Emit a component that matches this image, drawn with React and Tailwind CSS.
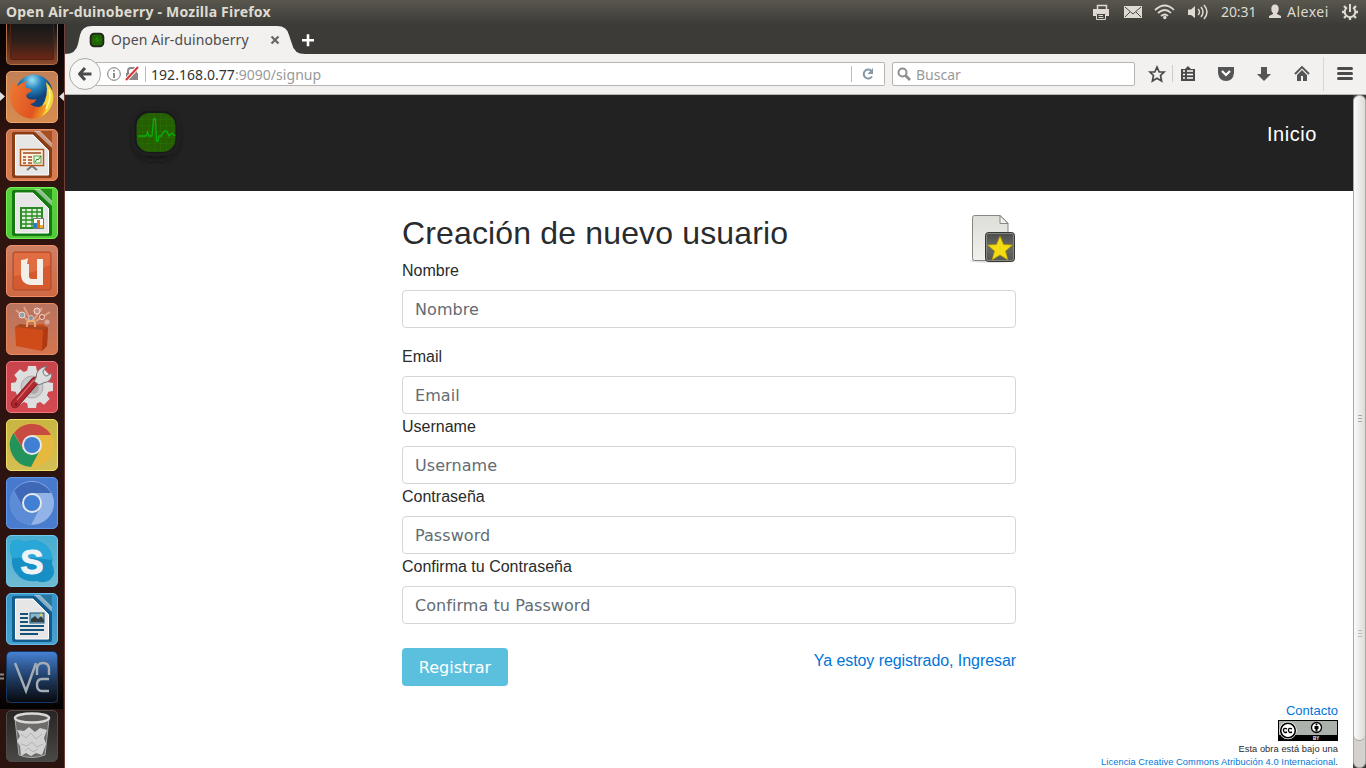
import React from "react";

const ui = "font-['Noto_Sans',sans-serif]";

function Tile({ className = "", children }) {
  return (
    <div className={`h-[52px] w-[52px] shrink-0 overflow-hidden rounded-[5px] border ${className}`}>
      <svg viewBox="1 1 50 50" className="block h-full w-full">{children}</svg>
    </div>
  );
}

function OfficePage({ dark, mid, children }) {
  return (
    <>
      <path d="M8 3H34L46 15V47Q46 49 44 49H8Q6 49 6 47V5Q6 3 8 3Z" fill={dark} />
      <path d="M34 2H46V14Z" fill={mid} />
      <path d="M28 2H34L46 14V19Z" fill="#fff" opacity=".5" />
      <path d="M9.500 6H27L42.500 21.500V46H9.500Z" fill="#e6e6e6" stroke="#fff" />
      {children}
    </>
  );
}

function ChromeMark({ red, green, yellow, blue }) {
  return (
    <g>
      <circle cx="26" cy="26" r="22" fill={yellow} />
      <path d="M7.500 14A22 22 0 0 0 25 48L34 31L26 26L17 30Z" fill={green} />
      <path d="M8 14A22 22 0 0 1 45 16H26L17 30Z" fill={red} />
      <circle cx="26" cy="26" r="10" fill="#e8e8e8" />
      <circle cx="26" cy="26" r="8" fill={blue} />
    </g>
  );
}

function Launcher() {
  return (
    <aside className="relative flex h-[744px] w-[65px] shrink-0 flex-col items-start gap-[6px] overflow-hidden border-r border-[#70413b] bg-gradient-to-b from-[#050303] from-0% via-[#30140f] via-15% to-[#2b1310] pl-[6px]">
      <div className="h-[41px] w-[52px] shrink-0 rounded-b-[5px] border border-t-0 border-[#b16d45] bg-gradient-to-b from-[#141110] to-[#8c4a2b] px-[3px] pb-[4px]">
        <div className="h-full rounded-b-[2px] border border-t-0 border-[#53200f] bg-gradient-to-b from-[#171719] via-[#30201a] to-[#6c2615]" />
      </div>

      <Tile className="border-[#efa46b] bg-gradient-to-b from-[#c18055] to-[#d58c50]">
        <defs>
          <radialGradient id="globe" cx=".45" cy=".15"><stop stopColor="#9be2f5" /><stop offset=".5" stopColor="#2684bd" /><stop offset="1" stopColor="#12457d" /></radialGradient>
          <linearGradient id="fox" x2="1" y2=".3"><stop stopColor="#ee7a35" /><stop offset=".7" stopColor="#e0541f" /><stop offset="1" stopColor="#f5a823" /></linearGradient>
        </defs>
        <circle cx="28" cy="22" r="18.500" fill="url(#globe)" />
        <path d="M8 10Q9 14 11 15Q15 12 21 10Q19 13 20 17Q24 17 26 19Q25 21 21 23Q19 26 23 28Q26 29 30 28Q30 32 24 33Q33 40 40 31Q43 27 44 22L47 24Q47 38 37 45Q26 51 14 44Q4 37 4 25Q4 16 8 10Z" fill="url(#fox)" />
        <path d="M40 11Q49 19 47 30Q45 40 36 45Q41 38 40 33L36 35Q43 25 40 11Z" fill="#f6d53b" />
        <path d="M43 18Q46 27 40 38" fill="none" stroke="#fff59a" strokeWidth="1.500" />
      </Tile>

      <Tile className="border-[#f09366] bg-gradient-to-b from-[#c77752] to-[#d77c50]">
        <OfficePage dark="#8c3d16" mid="#a74f23">
          <path d="M21 41L26 37L31 41M26 35V38" stroke="#777" strokeWidth="2" fill="none" />
          <rect x="14.500" y="20.500" width="23" height="16" fill="#fff0e1" stroke="#b4571d" strokeWidth="1.500" />
          <path d="M17 24H35M17 28H20M22 28H26M17 31H20M22 31H26M17 34H20M22 34H26" stroke="#9b4b20" strokeWidth="1.700" />
          <rect x="28" y="27" width="7" height="7" fill="#edfbe4" stroke="#56a044" />
          <path d="M29 33L31 30L32 31L35 27" stroke="#2b8228" fill="none" />
        </OfficePage>
      </Tile>

      <Tile className="border-[#71f253] bg-gradient-to-b from-[#5bd03f] to-[#52c93a]">
        <OfficePage dark="#147a12" mid="#248e1b">
          <path d="M15 21H36V41H15Z" fill="#dff2d8" stroke="#2a8b24" strokeWidth="2" />
          <path d="M15 25H36M15 29H36M15 33H36M15 37H36M20 21V41M26 21V41M31 21V41" stroke="#2a8b24" strokeWidth="1.300" />
          <rect x="27.500" y="31.500" width="10" height="10" fill="#fff" stroke="#777" />
          <path d="M28 36H31V41H28Z" fill="#287aca" /><path d="M31 33H34V41H31Z" fill="#da6d17" /><path d="M34 38H37V41H34Z" fill="#e4b329" />
        </OfficePage>
      </Tile>

      <Tile className="border-[#f38e66] bg-gradient-to-b from-[#cc8063] to-[#cf6944]">
        <rect x="7" y="7" width="38" height="38" rx="2" fill="#d65a2f" stroke="#ad492a" />
        <path d="M8 8H44V20Q26 29 8 31Z" fill="#e4784c" opacity=".65" />
        <path d="M15 15Q19 15 22 13L21 19H23V31Q23 34 26 34H31V14H37V40H24Q16 39 15 31Z" fill="#f4eee9" />
      </Tile>

      <Tile className="border-[#e48b66] bg-gradient-to-b from-[#b87460] to-[#d4754f]">
        <path d="M24 19L10 7M25 18L18 4M27 18L36 5M30 18L44 9" stroke="#f8bc9d" strokeWidth="2" opacity=".6" />
        <circle cx="16" cy="12" r="3" fill="#91a2b2" stroke="#f2d9ce" /><circle cx="31" cy="8" r="3" fill="#c1928a" stroke="#f2d9ce" /><circle cx="36" cy="14" r="2.500" fill="#bc5e49" stroke="#f2d9ce" /><circle cx="25" cy="15" r="2.500" fill="#87929e" stroke="#ddc0b2" /><circle cx="41" cy="19" r="2.500" fill="#d9a99b" />
        <path d="M9 24L37 21L42 25L41 43L36 48L10 43Z" fill="#cf4c19" />
        <path d="M9 24L14 21L42 24L37 27Z" fill="#a84720" /><path d="M37 27L42 24L41 43L36 48Z" fill="#ae3912" />
        <path d="M21 24V20Q21 18 23 18H27Q29 18 29 20V24" stroke="#edb074" strokeWidth="1.800" fill="none" />
      </Tile>

      <Tile className="border-[#f0797e] bg-gradient-to-b from-[#c8444b] to-[#d44952]">
        <g fill="#dedede">
          <circle cx="26" cy="26" r="17" />
          <path d="M22 5H30L31 11H21ZM22 47H30L31 41H21ZM5 22V30L11 31V21ZM47 22V30L41 31V21Z" />
          <path d="M22 5H30L31 11H21Z" transform="rotate(45 26 26)" /><path d="M22 5H30L31 11H21Z" transform="rotate(135 26 26)" /><path d="M22 5H30L31 11H21Z" transform="rotate(225 26 26)" /><path d="M22 5H30L31 11H21Z" transform="rotate(315 26 26)" />
        </g>
        <circle cx="26" cy="26" r="11" fill="#c9c9c9" stroke="#aaa" /><circle cx="27" cy="27" r="6" fill="#aaa" />
        <path d="M9 43L29 20" stroke="#801c22" strokeWidth="8.500" strokeLinecap="round" /><path d="M9 43L29 20" stroke="#b3272f" strokeWidth="6.500" strokeLinecap="round" />
        <path d="M11 39L28 19" stroke="#d8666a" strokeWidth="1.300" />
        <path d="M30 17Q30 7 41 5L37 10Q37 15 41 15L46 12Q46 21 37 22L33 24L28 20Z" fill="#ddd" stroke="#777" />
        <circle cx="10" cy="43" r="1.500" fill="#741820" />
      </Tile>

      <Tile className="border-[#f0df69] bg-gradient-to-b from-[#c8b542] to-[#d5bf53]">
        <ChromeMark red="#c84b42" green="#22945b" yellow="#e6b83e" blue="#417fd3" />
      </Tile>
      <Tile className="border-[#5f97eb] bg-gradient-to-b from-[#4779cd] to-[#4b7dce]">
        <ChromeMark red="#3f68b6" green="#5d8cd6" yellow="#91b3e8" blue="#407fd3" />
      </Tile>

      <Tile className="border-[#70c9eb] bg-gradient-to-b from-[#46aed2] to-[#70b9d4]">
        <path d="M6 6Q13 3 18 7Q31 2 41 11Q48 18 46 29Q51 38 44 45Q37 49 31 46Q17 48 10 38Q5 32 6 23Q2 13 6 6Z" fill="#168fc5" />
        <path d="M6 6Q13 3 18 7Q31 2 41 11Q48 18 46 25Q25 22 6 23Q2 13 6 6Z" fill="#31b1df" opacity=".7" />
        <text x="26" y="38.500" textAnchor="middle" fontSize="35" fontWeight="700" fontFamily="Liberation Sans, sans-serif" fill="#f0f3f5" stroke="#f0f3f5" strokeWidth=".9">S</text>
      </Tile>

      <Tile className="border-[#66bdea] bg-gradient-to-b from-[#3694c9] to-[#48a0ce]">
        <OfficePage dark="#125d8d" mid="#2b789f">
          <path d="M14 21H22M14 25H22M14 29H22M14 33H38M14 37H38M14 41H32" stroke="#15527a" strokeWidth="2" />
          <rect x="24" y="20" width="14" height="10" fill="#85b6cd" stroke="#15527a" /><path d="M25 29V26L29 23L32 26L35 23L38 27V29Z" fill="#343b3d" /><circle cx="35" cy="22" r="1.500" fill="#dcd052" />
        </OfficePage>
      </Tile>

      <Tile className="border-[#143765] bg-gradient-to-b from-[#4680d3] via-[#203f68] to-[#070a0f]">
        <path d="M9 12L20 40L30 12M31 24V18Q31 12 37 12Q43 12 43 18V24M43 28H36Q31 28 31 34Q31 40 36 40H43" fill="none" stroke="#a5acb4" strokeWidth="2.400" />
      </Tile>

      <div className="mt-[1px]">
        <Tile className="border-[#4c4a49] bg-gradient-to-b from-[#292524] to-[#494948]">
          <path d="M9 9L13 45Q26 50 39 45L43 9" fill="#6d6c6b" stroke="#a8a8a8" />
          <ellipse cx="26" cy="8" rx="17" ry="4.500" fill="#5c5a59" stroke="#d8d8d8" strokeWidth="2.500" />
          <path d="M11 20L18 21L23 17L29 22L34 18L41 20L38 28L40 34L36 45L30 43L25 46L20 43L15 46L14 36L11 31L14 26Z" fill="#d2d2d2" />
          <path d="M15 24L20 28L25 23L30 29L36 24M15 34L21 36L26 32L31 37L37 34M19 41L22 38L27 42L32 39" stroke="#b2b2b2" fill="none" />
        </Tile>
      </div>
      <svg className="pointer-events-none absolute left-0 top-0 h-[744px] w-[64px]" viewBox="0 0 64 744">
        <defs><linearGradient id="fade" x2="0" y2="1"><stop stopColor="#000" stopOpacity="0" /><stop offset="1" stopColor="#000" stopOpacity=".95" /></linearGradient></defs>
        <path d="M0 634H6V679H58V634H63V685H0Z" fill="url(#fade)" />
        <path d="M0 68L5 72.500L0 77ZM64 68L59 72.500L64 77Z" fill="#ddd" />
        <path d="M0 650.500H4M0 654.500H4" stroke="#888" strokeWidth="2" />
      </svg>
    </aside>
  );
}

function TopBar() {
  return (
    <header className={`flex h-6 items-center justify-between bg-gradient-to-b from-[#59574d] to-[#3d3c38] pl-[6px] pr-[7px] text-[#dfdbd2] ${ui}`}>
      <div className="whitespace-nowrap text-[14px] font-bold leading-6 tracking-[0.225px]">Open Air-duinoberry - Mozilla Firefox</div>
      <div className="flex h-6 items-center">
        <svg width="128" height="24" viewBox="0 0 128 24" className="mr-[1px]" fill="none" stroke="#dfdbd2">
          <path d="M5.500 9V5.500H14.500V9" strokeWidth="1.500" />
          <path d="M1 9H17V16H14V13H4V16H1Z" fill="#dfdbd2" stroke="none" /><path d="M4.500 13.500H13.500V19.500H4.500ZM6.500 15.500H11M6.500 17.500H11.500" />
          <path d="M32 6H50V18H32Z" fill="#dfdbd2" stroke="none" /><path d="M33 7L41 14L49 7M33 17L38 12M49 17L44 12" stroke="#494840" />
          <path d="M63 10Q73 1 82 10M66 13Q73 7 79 13M69 16Q73 13 76 16" strokeWidth="1.700" /><circle cx="72.800" cy="17.500" r="1.700" fill="#dfdbd2" stroke="none" />
          <path d="M96 9.500H99L103 6V18L99 15H96Z" fill="#dfdbd2" stroke="none" /><path d="M106 9Q109 12 106 15M109 7Q113 12 109 17M112 5Q118 12 112 19" strokeWidth="1.500" />
        </svg>
        <div className="w-[36px] whitespace-nowrap text-[14px] leading-6 tracking-[-0.1px]">20:31</div>
        <svg width="14" height="24" viewBox="0 0 14 24" className="ml-[11px] mr-[5px] shrink-0" fill="#dfdbd2"><ellipse cx="7" cy="9" rx="3.700" ry="4.500" /><path d="M5 12H9V14L13 16V18H1V16L5 14Z" /></svg>
        <div className="w-[43px] whitespace-nowrap text-[14px] leading-6 tracking-[0.5px]">Alexei</div>
        <svg width="18" height="24" viewBox="0 0 18 24" className="ml-[11px]" fill="none" stroke="#dfdbd2"><path d="M6 7.500A5.300 5.300 0 1 0 12 7.500" strokeWidth="2" /><path d="M9 4V12" strokeWidth="2" /><path d="M1 12H4M14 12H17M3 6L5 8M15 6L13 8M3 18L5 16M15 18L13 16M9 17V20" strokeWidth="2.300" /></svg>
      </div>
    </header>
  );
}

function TabStrip() {
  return (
    <div className={`relative h-[30px] bg-[#3c3b37] ${ui}`}>
      <svg className="absolute inset-0" width="270" height="30" viewBox="0 0 270 30"><path d="M0 30Q11 30 13 20L15 11Q17 2 27 2H212Q222 2 224 11L227 20Q229 30 240 30Z" fill="#f2f1f0" /><path d="M243 10V22M237 16H249" transform="translate(0 .200)" stroke="#fff" strokeWidth="2.600" /></svg>
      <div className="relative flex h-[30px] items-center pl-[24px] pt-[2px]">
        <svg width="16" height="16" viewBox="0 0 16 16" className="mr-[6px]"><rect x=".7" y=".7" width="14.600" height="14.600" rx="4.500" fill="#1d261a" /><rect x="2.500" y="2.500" width="11" height="11" rx="3" fill="#236202" /><path d="M4 8H7L8 5V10L9 8H12" fill="none" stroke="#159509" strokeWidth=".8" /></svg>
        <div className="w-[159px] whitespace-nowrap text-[14px] leading-5 tracking-[0.1px] text-[#4c4c4c]">Open Air-duinoberry</div>
        <svg width="10" height="10" viewBox="0 0 10 10"><path d="M1.500 1.500L8.500 8.500M8.500 1.500L1.500 8.500" stroke="#666" strokeWidth="2.200" /></svg>
      </div>
    </div>
  );
}

function Toolbar() {
  return (
    <div className={`flex h-[41px] items-center border-b border-[#b7b5b1] bg-[#f2f1f0] pl-[4px] ${ui}`}>
      <div className="relative z-10 flex h-8 w-8 shrink-0 items-center justify-center rounded-full border border-[#aba9a5] bg-[#f7f7f6]">
        <svg width="16" height="16" viewBox="0 0 16 16"><path d="M8 2L2.500 8L8 14M3 8H14.500" fill="none" stroke="#4b4b4b" strokeWidth="3" strokeLinejoin="round" /></svg>
      </div>
      <div className="-ml-[5px] flex h-6 w-[789px] shrink-0 items-center rounded-r-[2px] border border-l-0 border-[#b6b4b0] bg-white pl-[10px]">
        <svg width="34" height="16" viewBox="0 0 34 16" fill="none"><circle cx="8" cy="8" r="6.300" stroke="#777" /><path d="M8 7V12M8 4V5.500" stroke="#666" strokeWidth="1.500" /><path d="M22 8V5Q22 2 25 2H27Q30 2 30 5V8" stroke="#888" strokeWidth="2" /><rect x="20" y="7" width="12" height="7" fill="#888" /><path d="M20 14L32 1" stroke="#fff" strokeWidth="4" /><path d="M20 14L32 1" stroke="#dc3333" strokeWidth="2" /></svg>
        <span className="ml-[5px] mr-[5px] h-4 w-px bg-[#bbb]" />
        <div className="flex-1 whitespace-nowrap pt-[2px] text-[14px] leading-5 text-[#999]"><span className="tracking-[0.05px] text-[#333]">192.168.0.77</span><span className="tracking-[0.03px]">:9090/signup</span></div>
        <div className="flex h-4 w-[33px] items-center justify-center border-l border-[#bbb]"><svg width="14" height="14" viewBox="0 0 14 14"><path d="M11 9.500A4.500 4.500 0 1 1 10 3.500" fill="none" stroke="#8797a3" strokeWidth="2" /><path d="M12 1V7H6.500Z" fill="#8797a3" /></svg></div>
      </div>
      <div className="ml-[7px] flex h-6 w-[243px] shrink-0 items-center rounded-[2px] border border-[#b6b4b0] bg-white pl-[4px]">
        <svg width="15" height="15" viewBox="0 0 15 15" fill="none" stroke="#8f8f8f"><circle cx="5.500" cy="5.500" r="4" strokeWidth="2" /><path d="M8.500 8.500L13 13" strokeWidth="2.800" /></svg>
        <span className="ml-[4px] pt-[2px] text-[14px] leading-5 text-[#999]">Buscar</span>
      </div>
      <svg width="231" height="40" viewBox="0 0 231 40" className="shrink-0" fill="none">
        <path d="M22 13L24.200 18H29L25.500 21.500L26.600 27L22 24.200L17.400 27L18.500 21.500L15 18H19.800Z" stroke="#4a4a4a" strokeWidth="1.700" />
        <path d="M37.500 11V28" stroke="#ccc" />
        <path d="M46 15H50L53 12L56 15H60V27H46Z" fill="#4a4a4a" /><path d="M48 17H50M52 17H58M48 20.500H50M52 20.500H58M48 24H50M52 24H58" stroke="#fff" strokeWidth="1.700" />
        <path d="M83 13H99V19Q98 27 91 27Q84 27 83 19Z" fill="#555" /><path d="M87 17L91 21L95 17" stroke="#fff" strokeWidth="2.200" />
        <path d="M126 13H132V20H136L129 27L122 20H126Z" fill="#555" />
        <path d="M160 20L167 13L174 20" stroke="#555" strokeWidth="1.900" /><path d="M162 21L167 16L172 21V27H168V22H166V27H162Z" fill="#555" />
        <path d="M188.500 3V37" stroke="#d8d6d3" />
        <path d="M203.500 14.500H216.500M203.500 19.500H216.500M203.500 24.500H216.500" stroke="#4b4b4b" strokeWidth="3" strokeLinecap="round" />
      </svg>
    </div>
  );
}

function PulseLogo() {
  return (
    <svg width="64" height="64" viewBox="0 0 64 64">
      <defs><pattern id="grid" width="6" height="6" patternUnits="userSpaceOnUse"><rect width="6" height="6" fill="#255f02" /><path d="M0 0H6M0 0V6" stroke="#2b7006" /></pattern>
      <filter id="shade" x="-30%" y="-30%" width="160%" height="160%"><feGaussianBlur stdDeviation="3" /></filter></defs>
      <rect x="10" y="12" width="44" height="46" rx="17" fill="#121212" filter="url(#shade)" />
      <rect x="7" y="5" width="50" height="50" rx="18" fill="#202021" />
      <rect x="10.500" y="10" width="42" height="42" rx="14" fill="#18181c" />
      <rect x="13" y="12.500" width="38" height="38" rx="12" fill="url(#grid)" stroke="#235d06" />
      <path d="M14 35H22L23.500 31L25 35H28L29.500 18H31.500L32.500 40L34 40L35 35H37.500Q41.500 25 45 35Q48 30 51 35" fill="none" stroke="#0caf0b" strokeWidth="1.300" />
    </svg>
  );
}

function UserDocument() {
  return (
    <svg width="48" height="52" viewBox="1 0 48 52" className="shrink-0">
      <defs><linearGradient id="paper" x2="0" y2="1"><stop stopColor="#deded9" /><stop offset="1" stopColor="#f0f0ed" /></linearGradient><linearGradient id="badge" x2="0" y2="1"><stop stopColor="#4a4b49" /><stop offset=".5" stopColor="#686b67" /><stop offset="1" stopColor="#555753" /></linearGradient></defs>
      <ellipse cx="25" cy="47" rx="22" ry="1.700" fill="#ddd" />
      <path d="M7.500 1.500H33L41 9V46.500H7.500Q5.500 46.500 5.500 44.500V3.500Q5.500 1.500 7.500 1.500Z" fill="url(#paper)" stroke="#858781" />
      <path d="M33 1.500V9.500H41Z" fill="#f1f1ef" stroke="#858781" />
      <rect x="18.500" y="18.500" width="29" height="29" rx="3" fill="url(#badge)" stroke="#353735" /><rect x="19.500" y="19.500" width="27" height="27" rx="2" fill="none" stroke="#858783" />
      <path d="M33 22L36.500 30.500L45.500 31L38.500 37L41 46L33 41L25 46L27.500 37L20.500 31L29.500 30.500Z" fill="#f3dc12" stroke="#aa9502" strokeWidth=".7" />
    </svg>
  );
}

function Field({ label, placeholder, className = "" }) {
  return (
    <label className={`block text-[16px] leading-6 text-[#292b2c] ${className}`}>
      <span className="block h-8 pt-px">{label}</span>
      <input placeholder={placeholder} className="block h-[38px] w-full rounded-[4px] border border-[#d6d6d6] bg-white px-3 font-['DejaVu_Sans',sans-serif] text-[16px] tracking-[0.06px] outline-none placeholder:text-[#636c72]" />
    </label>
  );
}

function SignupPage() {
  return (
    <main className="flex min-w-0 flex-1 flex-col bg-white font-['Liberation_Sans',Arial,sans-serif]">
      <nav className="flex h-24 shrink-0 justify-between bg-[#222] pl-[59px] pr-[36px] pt-[6px]">
        <PulseLogo />
        <a className="pt-[18px] text-[20px] leading-[30px] tracking-[0.55px] text-white">Inicio</a>
      </nav>
      <form className="ml-[337px] mt-6 w-[614px]">
        <div className="flex h-[43px] justify-between"><h1 className="pt-px text-[32px] leading-[35px] tracking-[0.15px] text-[#292b2c]">Creación de nuevo usuario</h1><div className="-mt-px"><UserDocument /></div></div>
        <Field label="Nombre" placeholder="Nombre" className="mb-4" />
        <Field label="Email" placeholder="Email" />
        <Field label="Username" placeholder="Username" />
        <Field label="Contraseña" placeholder="Password" />
        <Field label="Confirma tu Contraseña" placeholder="Confirma tu Password" />
        <div className="mt-6 flex justify-between"><button type="button" className="h-[38px] w-[106px] rounded-[4px] bg-[#5bc0de] pt-px font-['DejaVu_Sans',sans-serif] text-[16px] text-white">Registrar</button><a className="pt-px text-[16px] leading-6 tracking-[-0.07px] text-[#0275d8]">Ya estoy registrado, Ingresar</a></div>
      </form>
      <footer className="mt-auto flex flex-col items-end pr-[15px] text-[#292b2c]">
        <a className="text-[13px] leading-[18px] text-[#0275d8]">Contacto</a>
        <svg width="60" height="21" viewBox="0 0 60 21"><rect width="60" height="21" fill="#000" /><rect x="1" y="1" width="58" height="14" fill="#aab2ab" /><circle cx="10" cy="10.500" r="8.700" fill="#fff" /><circle cx="10" cy="10.500" r="7.300" fill="#fff" stroke="#000" strokeWidth="1.600" /><path d="M9 8.800Q5 7.500 5.500 10.500Q6 13.500 9 12M14 8.800Q10 7.500 10.500 10.500Q11 13.500 14 12" fill="none" stroke="#000" strokeWidth="1.400" /><circle cx="38.500" cy="7.500" r="5" fill="#fff" stroke="#000" strokeWidth="1.300" /><circle cx="38.500" cy="4.500" r="1" /><path d="M36.500 6H40.500V9H39.500V11.500H37.500V9H36.500Z" /><text x="38.200" y="20" textAnchor="middle" fontFamily="Liberation Sans" fontWeight="700" fontSize="4.500" fill="#fff">BY</text></svg>
        <div className="-mb-px mt-[2px] whitespace-nowrap text-right text-[9.300px] leading-[13px] tracking-[0.06px]">Esta obra está bajo una<br /><a className="text-[#0275d8]">Licencia Creative Commons Atribución 4.0 Internacional</a>.</div>
      </footer>
    </main>
  );
}

function Scrollbar() {
  return (
    <div className="flex w-[13px] shrink-0 flex-col rounded-[6px] border border-[#aaa8a4] bg-[#d5d2cd]">
      <div className="relative flex h-[645px] flex-col items-center justify-center rounded-[6px] border-b border-[#aaa8a4] bg-gradient-to-r from-[#fafafa] to-[#dedcd8]">
        <div className="flex flex-col gap-[2px]"><i className="block h-px w-[4px] bg-[#aaa]" /><i className="block h-px w-[4px] bg-[#aaa]" /><i className="block h-px w-[4px] bg-[#aaa]" /></div>
        <div className="absolute left-[4px] top-[534px] flex flex-col gap-[2px]"><i className="block h-px w-[4px] bg-[#bbb]" /><i className="block h-px w-[4px] bg-[#bbb]" /><i className="block h-px w-[4px] bg-[#bbb]" /></div>
      </div>
    </div>
  );
}

export default function App() {
  return (
    <div className="h-[768px] w-[1366px] overflow-hidden bg-[#3c3b37]">
      <TopBar />
      <div className="flex h-[744px]">
        <Launcher />
        <section className="flex min-w-0 flex-1 flex-col"><TabStrip /><Toolbar /><div className="flex h-[673px]"><SignupPage /><Scrollbar /></div></section>
      </div>
    </div>
  );
}
